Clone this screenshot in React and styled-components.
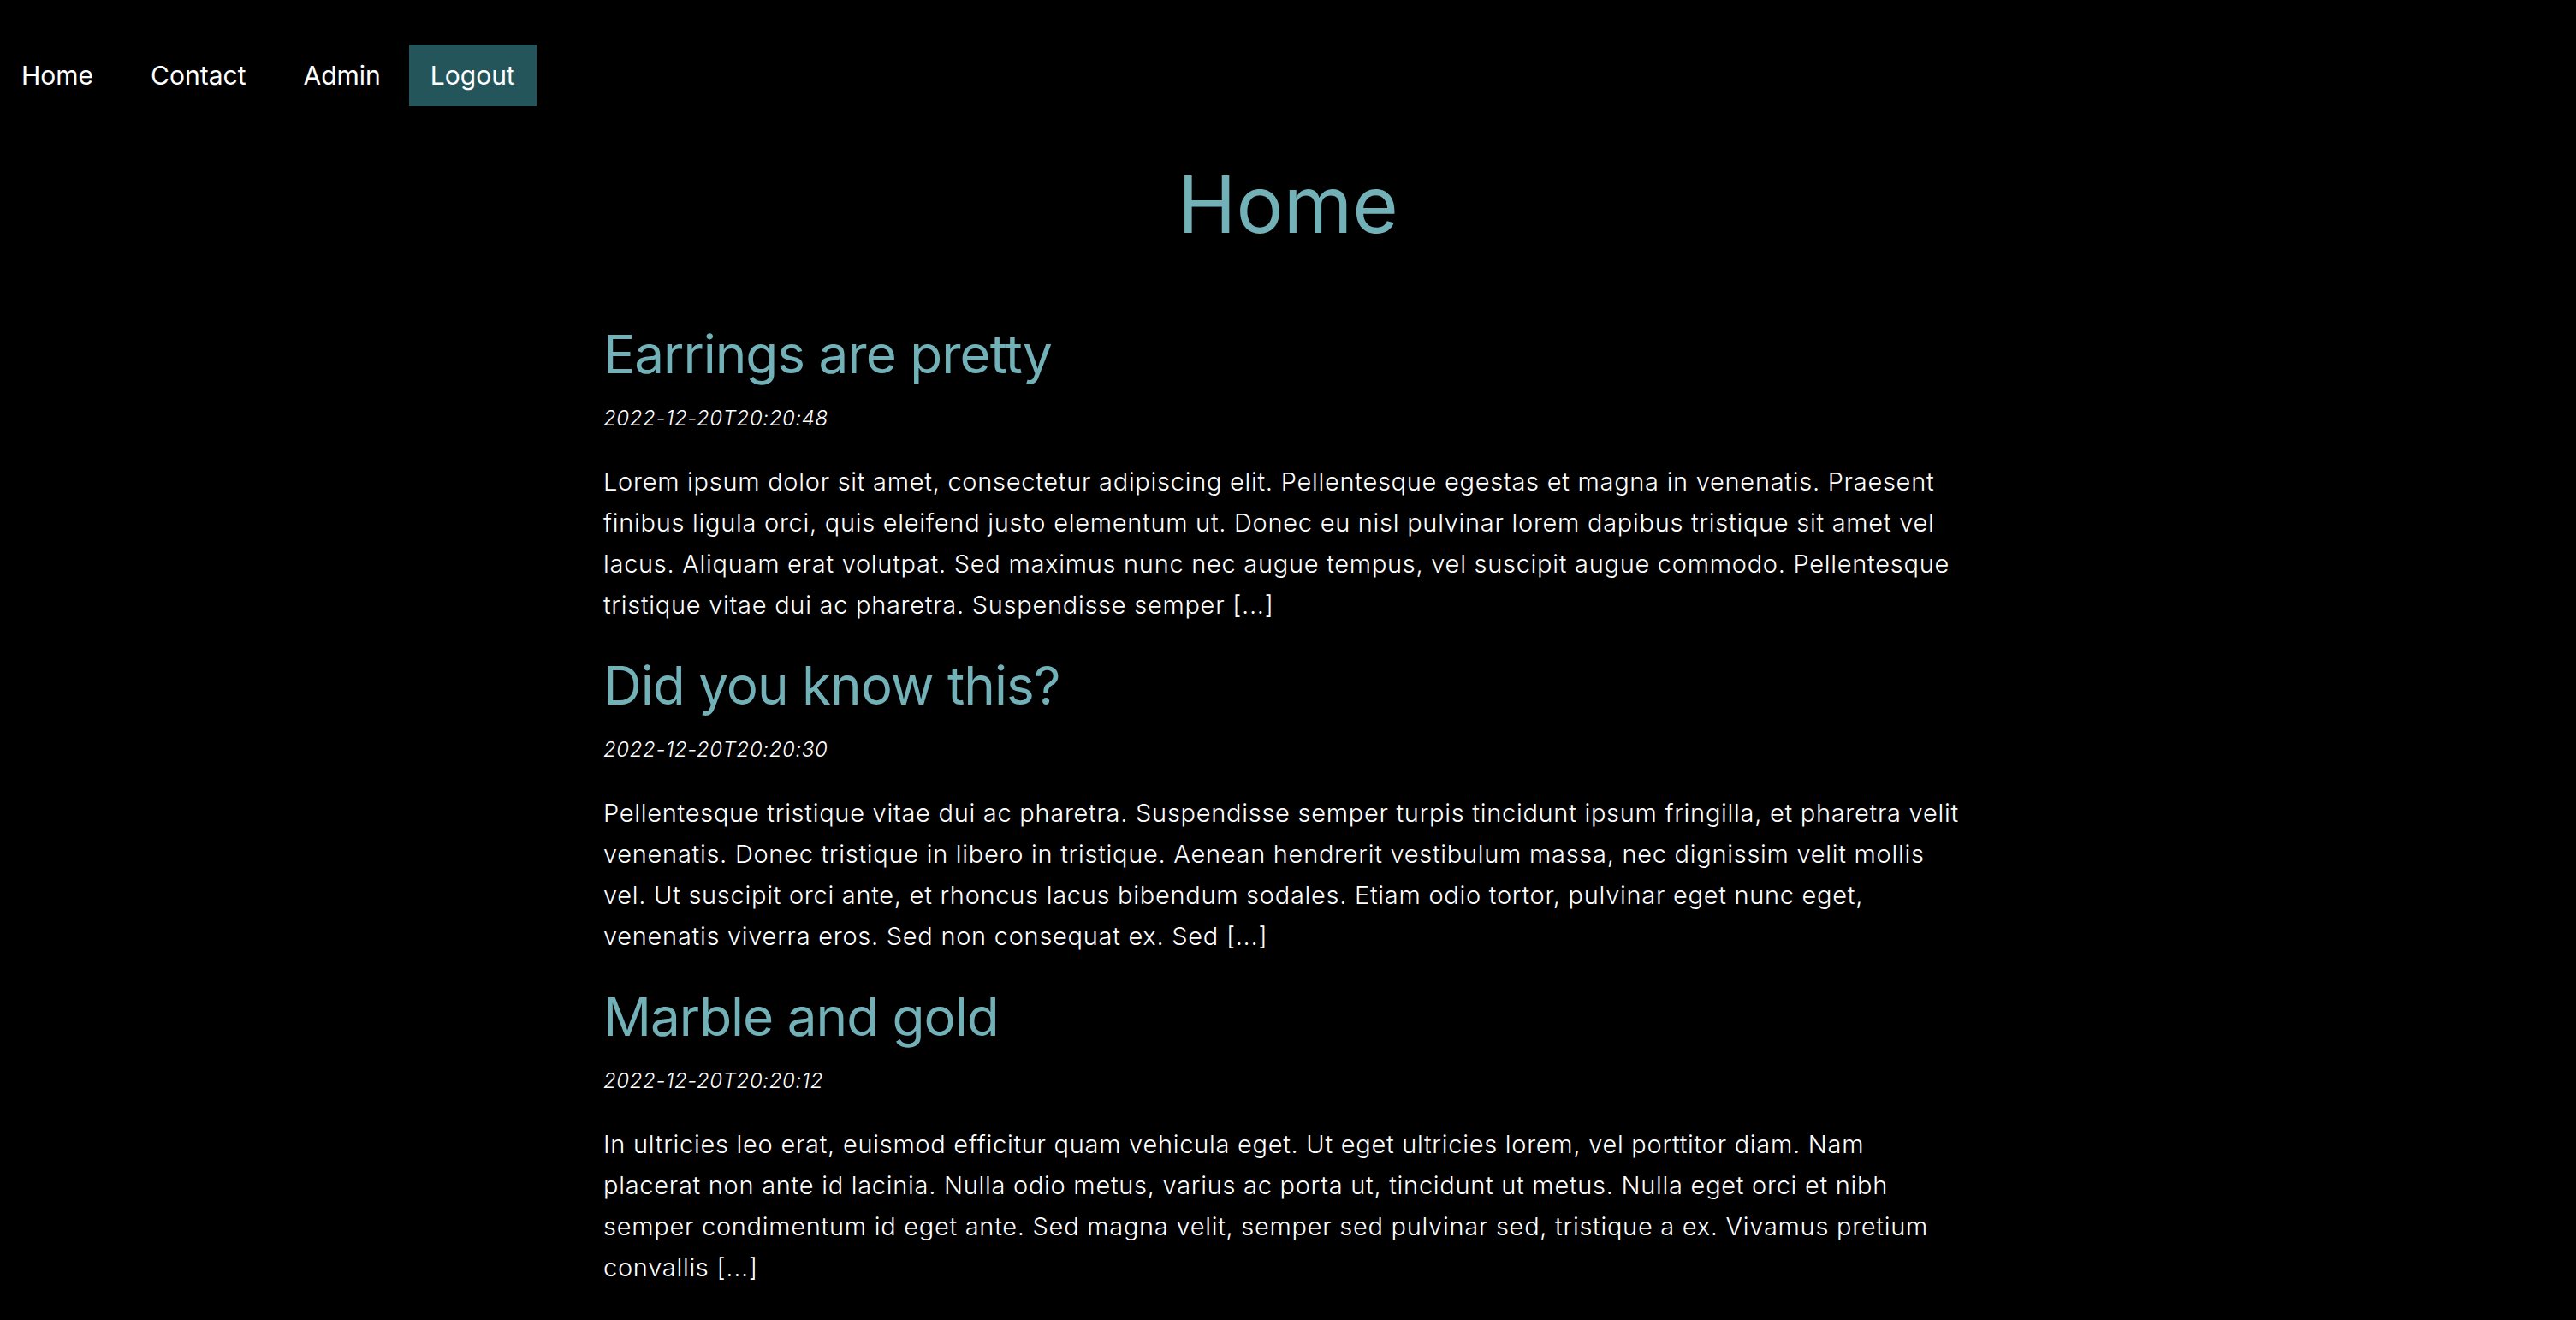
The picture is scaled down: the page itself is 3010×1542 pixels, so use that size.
import React from 'react';
import styled, { createGlobalStyle } from 'styled-components';

const GlobalStyle = createGlobalStyle`
  html, body { margin: 0; padding: 0; background: #000; }
  body { font-family: Inter, "Noto Sans", sans-serif; color: #fff; }
`;

const Page = styled.div`min-height: 1542px; background: #000;`
const Nav = styled.nav`display: flex; align-items: center; gap: 17px; padding: 52px 0 0 0;`
const NavLink = styled.a`display: block; padding: 18px 25px; font-size: 30px; line-height: 36px; color: #fff; text-decoration: none; background: ${p => p.$active ? '#23555a' : 'transparent'}; margin-left: ${p => p.$active ? '-9px' : '0'};`
const Title = styled.h1`margin: 60px 0 0; text-align: center; font-size: 92px; line-height: 110px; font-weight: 400; color: #73b1b9;`
const Content = styled.main`max-width: 1600px; margin: 83px auto 0; display: flex; flex-direction: column; gap: 33px;`
const Post = styled.article`display: flex; flex-direction: column;`
const PostTitle = styled.h2`margin: 0; font-size: 62px; line-height: 74px; font-weight: 400; letter-spacing: -1px; color: #73b1b9;`
const PostDate = styled.time`display: block; margin-top: 21px; font-size: 24px; line-height: 33px; font-style: italic; font-weight: 300; letter-spacing: 0.6px;`
const PostBody = styled.p`margin: 34px 0 0; max-width: 1590px; font-size: 29px; line-height: 48px; font-weight: 300; letter-spacing: 0.72px;`

const posts = [
  {
    title: 'Earrings are pretty',
    date: '2022-12-20T20:20:48',
    body: 'Lorem ipsum dolor sit amet, consectetur adipiscing elit. Pellentesque egestas et magna in venenatis. Praesent finibus ligula orci, quis eleifend justo elementum ut. Donec eu nisl pulvinar lorem dapibus tristique sit amet vel lacus. Aliquam erat volutpat. Sed maximus nunc nec augue tempus, vel suscipit augue commodo. Pellentesque tristique vitae dui ac pharetra. Suspendisse semper [...]',
  },
  {
    title: 'Did you know this?',
    date: '2022-12-20T20:20:30',
    body: 'Pellentesque tristique vitae dui ac pharetra. Suspendisse semper turpis tincidunt ipsum fringilla, et pharetra velit venenatis. Donec tristique in libero in tristique. Aenean hendrerit vestibulum massa, nec dignissim velit mollis vel. Ut suscipit orci ante, et rhoncus lacus bibendum sodales. Etiam odio tortor, pulvinar eget nunc eget, venenatis viverra eros. Sed non consequat ex. Sed [...]',
  },
  {
    title: 'Marble and gold',
    date: '2022-12-20T20:20:12',
    body: 'In ultricies leo erat, euismod efficitur quam vehicula eget. Ut eget ultricies lorem, vel porttitor diam. Nam placerat non ante id lacinia. Nulla odio metus, varius ac porta ut, tincidunt ut metus. Nulla eget orci et nibh semper condimentum id eget ante. Sed magna velit, semper sed pulvinar sed, tristique a ex. Vivamus pretium convallis [...]',
  },
];

export default function App() {
  return (
    <Page>
      <GlobalStyle />
      <Nav>
        <NavLink href="#">Home</NavLink>
        <NavLink href="#">Contact</NavLink>
        <NavLink href="#">Admin</NavLink>
        <NavLink href="#" $active>Logout</NavLink>
      </Nav>
      <Title>Home</Title>
      <Content>
        {posts.map(post => (
          <Post key={post.date}>
            <PostTitle>{post.title}</PostTitle>
            <PostDate>{post.date}</PostDate>
            <PostBody>{post.body}</PostBody>
          </Post>
        ))}
      </Content>
    </Page>
  );
}
